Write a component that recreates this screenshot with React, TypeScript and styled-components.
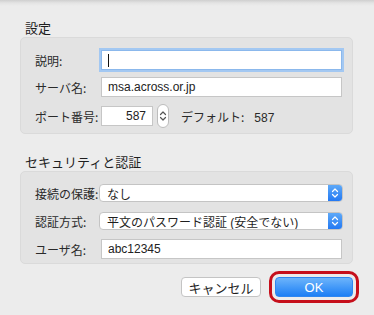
import React from 'react';
import styled, { createGlobalStyle } from 'styled-components';

const GlobalStyle = createGlobalStyle`
  html, body {
    margin: 0;
    padding: 0;
    background: #ececec;
  }
  body {
    font-family: "Liberation Sans", "Noto Sans CJK JP", sans-serif;
    color: #262626;
  }
`;

const Sheet = styled.div`
  width: 374px;
  height: 315px;
  box-sizing: border-box;
  padding: 0 21px 0 20px;
  background: linear-gradient(to bottom, #cfcfcf 0px, #e4e4e4 3px, #ececec 6px, #ececec 100%);
  overflow: hidden;
`;

const SectionTitle = styled.div<{ $top: number }>`
  margin-top: ${p => p.$top}px;
  margin-bottom: 1px;
  padding-left: 5px;
  height: 16px;
  line-height: 16px;
  font-size: 13px;
  font-family: "Noto Sans CJK JP", sans-serif;
  color: #1e1e1e;
`;

const Group = styled.div<{ $pad: string; $gap: number }>`
  display: flex;
  flex-direction: column;
  gap: ${p => p.$gap}px;
  padding: ${p => p.$pad};
  background: #e3e3e3;
  border: 1px solid #dadada;
  border-radius: 5px;
`;

const Row = styled.div<{ $h?: number; $mt?: number }>`
  display: flex;
  align-items: center;
  height: ${p => p.$h ?? 20}px;
  margin-top: ${p => p.$mt ?? 0}px;
  padding: 0 10px 0 14px;
`;

const Label = styled.div`
  width: 66px;
  flex: none;
  font-size: 12px;
  font-family: "Noto Sans CJK JP", sans-serif;
  color: #2a2a2a;
`;

const Field = styled.div<{ $width?: number; $focus?: boolean; $right?: boolean }>`
  box-sizing: border-box;
  height: 20px;
  width: ${p => (p.$width ? `${p.$width}px` : 'auto')};
  flex: ${p => (p.$width ? 'none' : '1')};
  display: flex;
  align-items: center;
  justify-content: ${p => (p.$right ? 'flex-end' : 'flex-start')};
  padding: 0 6px;
  background: #fff;
  border: 1px solid ${p => (p.$focus ? '#8bb8ec' : '#c6c6c6')};
  box-shadow: ${p => (p.$focus ? '0 0 0 2px #a3c8f2' : 'none')};
  font-size: 12px;
  font-family: "Liberation Sans", "Noto Sans CJK JP", sans-serif;
  color: #222;
`;

const Caret = styled.span`
  display: block;
  width: 1px;
  height: 13px;
  background: #111;
`;

const Stepper = styled.div`
  box-sizing: border-box;
  flex: none;
  margin-left: 4px;
  width: 12px;
  height: 24px;
  border: 1px solid #bdbdbd;
  border-radius: 6px;
  background: #fff;
  display: flex;
  align-items: center;
  justify-content: center;
`;

const Note = styled.div`
  margin-left: 12px;
  font-size: 12px;
  font-family: "Noto Sans CJK JP", sans-serif;
  color: #2a2a2a;
  span {
    margin-left: 10px;
    font-family: "Liberation Sans", sans-serif;
  }
`;

const Select = styled.div`
  box-sizing: border-box;
  flex: 1;
  margin-left: -2px;
  margin-right: -1px;
  height: 18px;
  display: flex;
  align-items: stretch;
  background: #fff;
  border: 1px solid #c4c4c4;
  border-radius: 4px;
  overflow: hidden;
`;

const SelectText = styled.div`
  flex: 1;
  display: flex;
  align-items: center;
  padding-left: 7px;
  font-size: 12px;
  font-family: "Liberation Sans", "Noto Sans CJK JP", sans-serif;
  color: #1e1e1e;
`;

const SelectArrow = styled.div`
  width: 14px;
  flex: none;
  background: linear-gradient(to bottom, #5ea9f8, #2379f3);
  display: flex;
  align-items: center;
  justify-content: center;
`;

const Buttons = styled.div`
  display: flex;
  justify-content: flex-end;
  align-items: center;
  gap: 14px;
  margin-top: 13px;
`;

const Button = styled.div<{ $primary?: boolean }>`
  box-sizing: border-box;
  height: 20px;
  width: ${p => (p.$primary ? 78 : 80)}px;
  display: flex;
  align-items: center;
  justify-content: center;
  border-radius: 4px;
  font-size: 13px;
  font-family: "Liberation Sans", "Noto Sans CJK JP", sans-serif;
  color: ${p => (p.$primary ? '#fff' : '#1e1e1e')};
  background: ${p => (p.$primary ? 'linear-gradient(to bottom, #6cb4fb, #1d7ff5)' : '#fff')};
  border: 1px solid ${p => (p.$primary ? '#2f86f0' : '#c4c4c4')};
  outline: ${p => (p.$primary ? '3px solid #c60f1b' : 'none')};
  outline-offset: 3px;
`;

const Chevrons = ({ color }: { color: string }) => (
  <svg width="8" height="12" viewBox="0 0 8 12">
    <path d="M1.5 4.5 L4 2 L6.5 4.5 M1.5 7.5 L4 10 L6.5 7.5" fill="none" stroke={color} strokeWidth="1.2" strokeLinecap="round" strokeLinejoin="round" />
  </svg>
);

export default function App() {
  return (
    <>
      <GlobalStyle />
      <Sheet>
        <SectionTitle $top={20}>設定</SectionTitle>
        <Group $pad="12px 0 5px" $gap={7}>
          <Row>
            <Label>説明:</Label>
            <Field $focus>
              <Caret />
            </Field>
          </Row>
          <Row>
            <Label>サーバ名:</Label>
            <Field>msa.across.or.jp</Field>
          </Row>
          <Row $h={24}>
            <Label>ポート番号:</Label>
            <Field $width={52} $right>587</Field>
            <Stepper>
              <Chevrons color="#555" />
            </Stepper>
            <Note>
              デフォルト:<span>587</span>
            </Note>
          </Row>
        </Group>

        <SectionTitle $top={20}>セキュリティと認証</SectionTitle>
        <Group $pad="12px 0 4px" $gap={10}>
          <Row $h={18}>
            <Label>接続の保護:</Label>
            <Select>
              <SelectText>なし</SelectText>
              <SelectArrow>
                <Chevrons color="#fff" />
              </SelectArrow>
            </Select>
          </Row>
          <Row $h={18}>
            <Label>認証方式:</Label>
            <Select>
              <SelectText>平文のパスワード認証 (安全でない)</SelectText>
              <SelectArrow>
                <Chevrons color="#fff" />
              </SelectArrow>
            </Select>
          </Row>
          <Row $mt={-1}>
            <Label>ユーザ名:</Label>
            <Field>abc12345</Field>
          </Row>
        </Group>

        <Buttons>
          <Button>キャンセル</Button>
          <Button $primary>OK</Button>
        </Buttons>
      </Sheet>
    </>
  );
}
